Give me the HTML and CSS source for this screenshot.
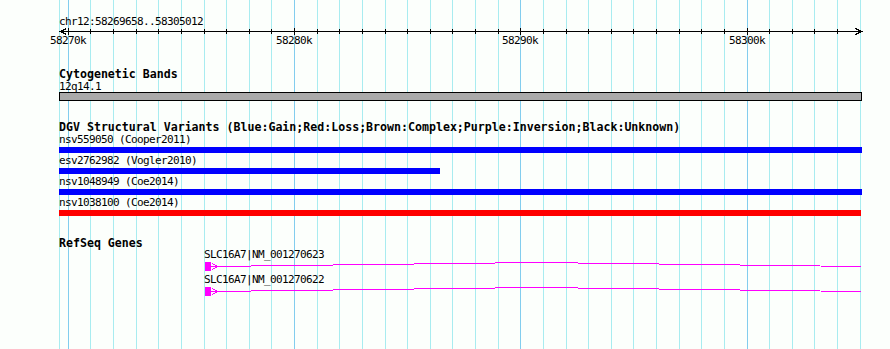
FILE: index.html
```html
<!DOCTYPE html>
<html lang="en">
<head>
    <meta charset="UTF-8">
    <title>chr12:58269658..58305012</title>
    <link rel="stylesheet" href="styles.css">
</head>
<body>
    <div class="browser">
        <!-- grid behind the tracks, one line per kb -->
        <svg class="grid" width="890" height="349">
            <g class="minor">
                <line x1="59.5" y1="0" x2="59.5" y2="349"/>
                <line x1="90.5" y1="0" x2="90.5" y2="349"/>
                <line x1="113.5" y1="0" x2="113.5" y2="349"/>
                <line x1="136.5" y1="0" x2="136.5" y2="349"/>
                <line x1="158.5" y1="0" x2="158.5" y2="349"/>
                <line x1="181.5" y1="0" x2="181.5" y2="349"/>
                <line x1="204.5" y1="0" x2="204.5" y2="349"/>
                <line x1="226.5" y1="0" x2="226.5" y2="349"/>
                <line x1="249.5" y1="0" x2="249.5" y2="349"/>
                <line x1="271.5" y1="0" x2="271.5" y2="349"/>
                <line x1="317.5" y1="0" x2="317.5" y2="349"/>
                <line x1="339.5" y1="0" x2="339.5" y2="349"/>
                <line x1="362.5" y1="0" x2="362.5" y2="349"/>
                <line x1="385.5" y1="0" x2="385.5" y2="349"/>
                <line x1="407.5" y1="0" x2="407.5" y2="349"/>
                <line x1="430.5" y1="0" x2="430.5" y2="349"/>
                <line x1="452.5" y1="0" x2="452.5" y2="349"/>
                <line x1="475.5" y1="0" x2="475.5" y2="349"/>
                <line x1="498.5" y1="0" x2="498.5" y2="349"/>
                <line x1="543.5" y1="0" x2="543.5" y2="349"/>
                <line x1="566.5" y1="0" x2="566.5" y2="349"/>
                <line x1="588.5" y1="0" x2="588.5" y2="349"/>
                <line x1="611.5" y1="0" x2="611.5" y2="349"/>
                <line x1="633.5" y1="0" x2="633.5" y2="349"/>
                <line x1="656.5" y1="0" x2="656.5" y2="349"/>
                <line x1="679.5" y1="0" x2="679.5" y2="349"/>
                <line x1="701.5" y1="0" x2="701.5" y2="349"/>
                <line x1="724.5" y1="0" x2="724.5" y2="349"/>
                <line x1="769.5" y1="0" x2="769.5" y2="349"/>
                <line x1="792.5" y1="0" x2="792.5" y2="349"/>
                <line x1="814.5" y1="0" x2="814.5" y2="349"/>
                <line x1="837.5" y1="0" x2="837.5" y2="349"/>
                <line x1="860.5" y1="0" x2="860.5" y2="349"/>
            </g>
            <g class="major">
                <line x1="68.5" y1="0" x2="68.5" y2="349"/>
                <line x1="294.5" y1="0" x2="294.5" y2="349"/>
                <line x1="520.5" y1="0" x2="520.5" y2="349"/>
                <line x1="747.5" y1="0" x2="747.5" y2="349"/>
            </g>
        </svg>

        <div class="ruler">
            <div class="ruler-title">chr12:58269658..58305012</div>
            <svg class="ruler-scale" width="890" height="22">
                <polyline class="arrow" points="66.5,0.5 60.5,3.5 66.5,6.5"/>
                <polyline class="arrow" points="855.5,0.5 861.5,3.5 855.5,6.5"/>
                <line x1="60" y1="3.5" x2="862" y2="3.5"/>
                <g class="ticks">
                    <line x1="68.5" y1="0" x2="68.5" y2="7"/>
                    <line x1="90.5" y1="1" x2="90.5" y2="6"/>
                    <line x1="113.5" y1="1" x2="113.5" y2="6"/>
                    <line x1="136.5" y1="1" x2="136.5" y2="6"/>
                    <line x1="158.5" y1="1" x2="158.5" y2="6"/>
                    <line x1="181.5" y1="1" x2="181.5" y2="6"/>
                    <line x1="204.5" y1="1" x2="204.5" y2="6"/>
                    <line x1="226.5" y1="1" x2="226.5" y2="6"/>
                    <line x1="249.5" y1="1" x2="249.5" y2="6"/>
                    <line x1="271.5" y1="1" x2="271.5" y2="6"/>
                    <line x1="294.5" y1="0" x2="294.5" y2="7"/>
                    <line x1="317.5" y1="1" x2="317.5" y2="6"/>
                    <line x1="339.5" y1="1" x2="339.5" y2="6"/>
                    <line x1="362.5" y1="1" x2="362.5" y2="6"/>
                    <line x1="385.5" y1="1" x2="385.5" y2="6"/>
                    <line x1="407.5" y1="1" x2="407.5" y2="6"/>
                    <line x1="430.5" y1="1" x2="430.5" y2="6"/>
                    <line x1="452.5" y1="1" x2="452.5" y2="6"/>
                    <line x1="475.5" y1="1" x2="475.5" y2="6"/>
                    <line x1="498.5" y1="1" x2="498.5" y2="6"/>
                    <line x1="520.5" y1="0" x2="520.5" y2="7"/>
                    <line x1="543.5" y1="1" x2="543.5" y2="6"/>
                    <line x1="566.5" y1="1" x2="566.5" y2="6"/>
                    <line x1="588.5" y1="1" x2="588.5" y2="6"/>
                    <line x1="611.5" y1="1" x2="611.5" y2="6"/>
                    <line x1="633.5" y1="1" x2="633.5" y2="6"/>
                    <line x1="656.5" y1="1" x2="656.5" y2="6"/>
                    <line x1="679.5" y1="1" x2="679.5" y2="6"/>
                    <line x1="701.5" y1="1" x2="701.5" y2="6"/>
                    <line x1="724.5" y1="1" x2="724.5" y2="6"/>
                    <line x1="747.5" y1="0" x2="747.5" y2="7"/>
                    <line x1="769.5" y1="1" x2="769.5" y2="6"/>
                    <line x1="792.5" y1="1" x2="792.5" y2="6"/>
                    <line x1="814.5" y1="1" x2="814.5" y2="6"/>
                    <line x1="837.5" y1="1" x2="837.5" y2="6"/>
                </g>
                <text x="68" y="16">58270k</text>
                <text x="294" y="16">58280k</text>
                <text x="520" y="16">58290k</text>
                <text x="747" y="16">58300k</text>
            </svg>
        </div>

        <section class="track track-cyto">
            <h2 class="track-title">Cytogenetic Bands</h2>
            <div class="feature-label">12q14.1</div>
            <div class="band"></div>
        </section>

        <section class="track track-dgv">
            <h2 class="track-title">DGV Structural Variants (Blue:Gain;Red:Loss;Brown:Complex;Purple:Inversion;Black:Unknown)</h2>
            <div class="variant">
                <div class="feature-label">nsv559050 (Cooper2011)</div>
                <div class="bar gain"></div>
            </div>
            <div class="variant">
                <div class="feature-label">esv2762982 (Vogler2010)</div>
                <div class="bar gain" style="width: 381px"></div>
            </div>
            <div class="variant">
                <div class="feature-label">nsv1048949 (Coe2014)</div>
                <div class="bar gain"></div>
            </div>
            <div class="variant">
                <div class="feature-label">nsv1038100 (Coe2014)</div>
                <div class="bar loss" style="width: 802px"></div>
            </div>
        </section>

        <section class="track track-genes">
            <h2 class="track-title">RefSeq Genes</h2>
            <div class="gene">
                <div class="gene-label">SLC16A7|NM_001270623</div>
                <svg class="gene-model" width="890" height="12">
                    <rect x="205" y="1" width="6" height="9"/>
                    <polyline class="strand" points="212.5,2.5 217.5,5.5 212.5,8.5"/>
                    <polyline class="intron" points="211,5.5 536,1.5 861,5.5"/>
                </svg>
            </div>
            <div class="gene">
                <div class="gene-label">SLC16A7|NM_001270622</div>
                <svg class="gene-model" width="890" height="12">
                    <rect x="205" y="1" width="6" height="9"/>
                    <polyline class="strand" points="212.5,2.5 217.5,5.5 212.5,8.5"/>
                    <polyline class="intron" points="211,5.5 536,1.5 861,5.5"/>
                </svg>
            </div>
        </section>
    </div>
</body>
</html>
```

FILE: styles.css
```css
* {
    margin: 0;
    padding: 0;
    box-sizing: border-box;
}

body {
    background: #fcfffc;
    font-family: "DejaVu Sans Mono", "Liberation Mono", monospace;
    font-size: 11px;
    letter-spacing: -0.62px;
    color: #000;
}

.browser {
    position: relative;
    width: 890px;
    height: 349px;
    overflow: hidden;
}

/* Grid */
.grid {
    position: absolute;
    top: 0;
    left: 0;
    z-index: 0;
}

.grid line {
    stroke-width: 1;
    shape-rendering: crispEdges;
}

.grid .minor line {
    stroke: #a8ecf0;
}

.grid .major line {
    stroke: #82cdee;
}

.ruler,
.track {
    position: relative;
    z-index: 1;
}

/* Ruler */
.ruler {
    padding-top: 15px;
}

.ruler-title {
    padding-left: 59px;
    line-height: 13px;
    height: 13px;
}

.ruler-scale {
    display: block;
}

.ruler-scale line,
.ruler-scale polyline {
    stroke: #000;
    stroke-width: 1;
    fill: none;
    shape-rendering: crispEdges;
}

.ruler-scale text {
    font-family: "DejaVu Sans Mono", "Liberation Mono", monospace;
    font-size: 11px;
    letter-spacing: -0.62px;
    text-anchor: middle;
    fill: #000;
}

/* Tracks */
.track-title {
    padding-left: 59px;
    height: 11px;
    line-height: 12px;
    font-size: 11.6px;
    letter-spacing: 0;
    font-weight: bold;
}

.track-cyto {
    margin-top: 18px;
}

.track-dgv {
    margin-top: 20px;
}

.track-dgv .track-title {
    height: 12px;
}

.track-genes {
    margin-top: 21px;
}

.feature-label {
    padding-left: 59px;
    height: 13px;
    line-height: 13px;
    white-space: nowrap;
}

.track-cyto .feature-label {
    margin-top: 1px;
    height: 12px;
}

.band {
    margin-left: 59px;
    width: 803px;
    height: 9px;
    background: #aaaaaa;
    border: 1px solid #000;
}

.bar {
    margin: 1px 0 1px 59px;
    width: 803px;
    height: 6px;
}

.bar.gain {
    background: #0000ff;
}

.bar.loss {
    background: #ff0000;
}

/* Genes */
.gene-label {
    padding-left: 204px;
    height: 13px;
    line-height: 13px;
}

.gene-model {
    display: block;
}

.gene-model rect {
    fill: #ff00ff;
}

.gene-model polyline {
    fill: none;
    stroke: #ff00ff;
    stroke-width: 1;
    shape-rendering: crispEdges;
}
```
